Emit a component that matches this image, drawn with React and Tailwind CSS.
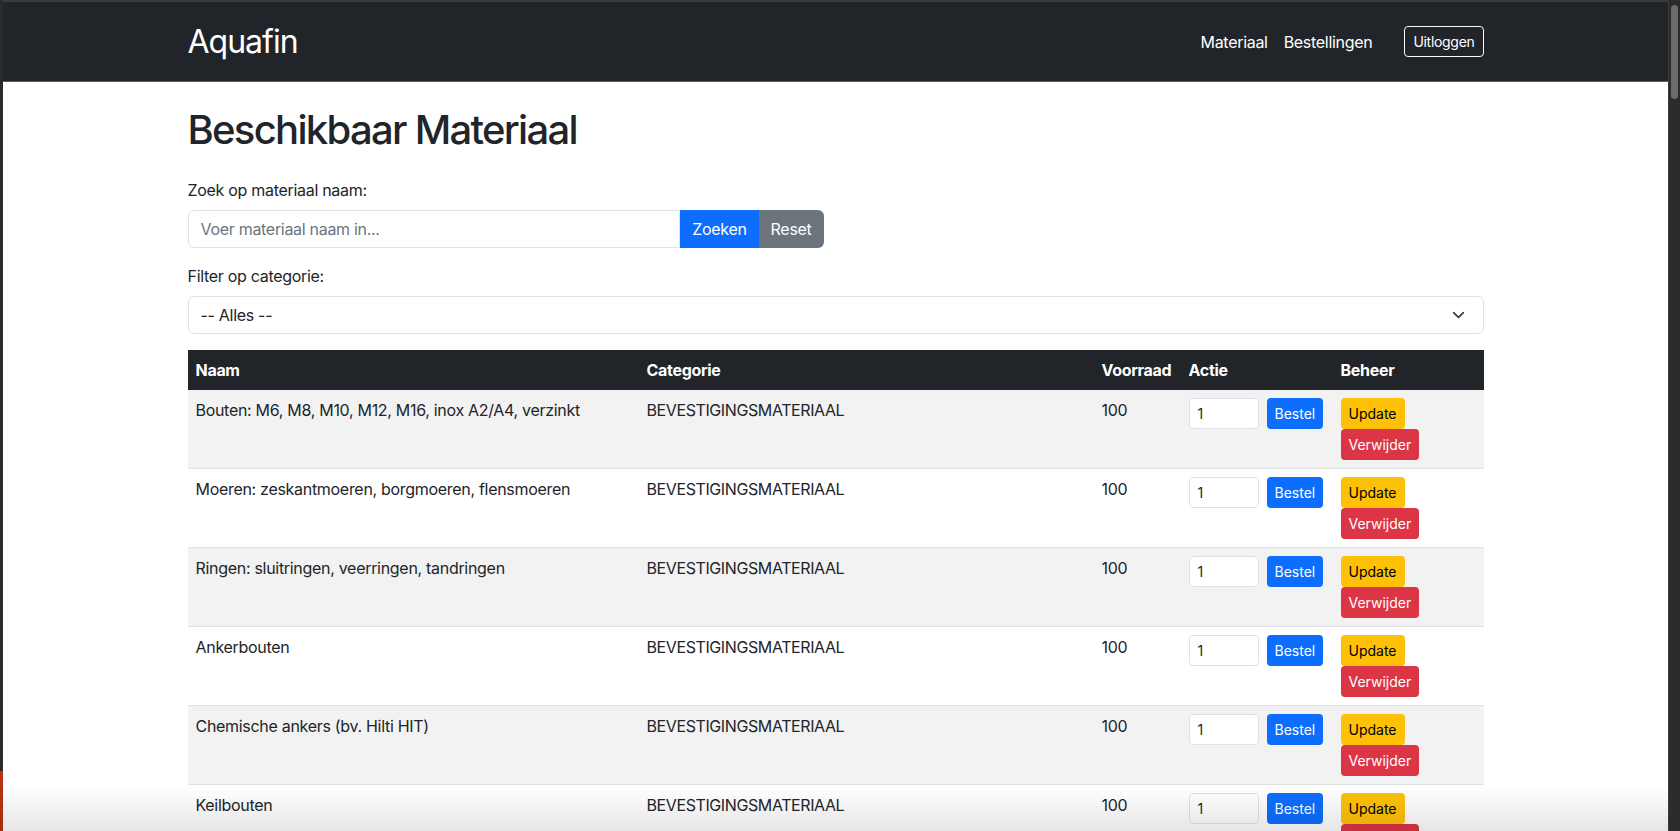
import React from 'react';

const materials = [
    'Bouten: M6, M8, M10, M12, M16, inox A2/A4, verzinkt',
    'Moeren: zeskantmoeren, borgmoeren, flensmoeren',
    'Ringen: sluitringen, veerringen, tandringen',
    'Ankerbouten',
    'Chemische ankers (bv. Hilti HIT)',
    'Keilbouten',
    'Draadstangen',
    'Schroeven',
];

const Navbar = () => (
    <nav className="bg-[#212529] border-b border-[#5c5f63] h-[80px] shrink-0">
        <div className="max-w-[1296px] mx-auto h-full flex items-center justify-between">
            <a className="text-white text-[32px] leading-none tracking-[-1px]">Aquafin</a>
            <div className="flex items-center">
                <a className="text-white text-[16px] px-2 py-2">Materiaal</a>
                <a className="text-white text-[16px] px-2 py-2">Bestellingen</a>
                <button className="ml-6 border border-[#f8f9fa] rounded text-white text-[14px] px-2 h-[31px]">
                    Uitloggen
                </button>
            </div>
        </div>
    </nav>
);

const Row = ({ name, striped }) => (
    <tr className={`${striped ? 'bg-[#f2f2f2]' : 'bg-white'} border-b border-[#dee2e6] align-top`}>
        <td className="p-2">{name}</td>
        <td className="p-2 tracking-[-0.4px]">BEVESTIGINGSMATERIAAL</td>
        <td className="p-2">100</td>
        <td className="p-2">
            <div className="flex items-start gap-2">
                <input
                    defaultValue="1"
                    className="w-[70px] h-[31px] bg-white border border-[#dee2e6] rounded px-2 text-[14px] outline-none"
                />
                <button className="h-[31px] px-2 rounded bg-[#0d6efd] text-white text-[14px] tracking-normal">Bestel</button>
            </div>
        </td>
        <td className="p-2">
            <div className="flex flex-col items-start">
                <button className="h-[31px] px-2 rounded bg-[#ffc107] text-black text-[14px] tracking-normal">Update</button>
                <button className="h-[31px] px-2 rounded bg-[#dc3545] text-white text-[14px] tracking-normal">Verwijder</button>
            </div>
        </td>
    </tr>
);

export default function App() {
    return (
        <div className="relative h-screen overflow-hidden flex bg-[#2a2a2a] font-['Inter',sans-serif] tracking-[-0.3px] text-[#212529]">
            {/* left window edge */}
            <div className="w-[3px] shrink-0 flex flex-col">
                <div className="flex-1 bg-[#2b2b2b]" />
                <div className="h-[60px] bg-[#b5330f]" />
            </div>

            {/* page */}
            <div className="flex-1 flex flex-col bg-white overflow-hidden border-t-2 border-[#3a3a3a]">
                <Navbar />

                <main className="max-w-[1296px] w-full mx-auto mt-6">
                    <h1 className="text-[40px] leading-[48px] font-medium tracking-[-1.7px] mb-6">Beschikbaar Materiaal</h1>

                    <div className="w-[636px] mb-4">
                        <label className="block text-[16px] leading-6 mb-2">Zoek op materiaal naam:</label>
                        <div className="flex h-[38px]">
                            <input
                                placeholder="Voer materiaal naam in..."
                                className="flex-1 border border-[#dee2e6] rounded-l-md px-3 text-[16px] tracking-[-0.3px] placeholder:text-[#6c757d] outline-none"
                            />
                            <button className="px-3 bg-[#0d6efd] text-white text-[16px]">Zoeken</button>
                            <button className="px-3 bg-[#6c757d] text-white text-[16px] rounded-r-md">Reset</button>
                        </div>
                    </div>

                    <div className="mb-4">
                        <label className="block text-[16px] leading-6 mb-2">Filter op categorie:</label>
                        <div className="h-[38px] border border-[#dee2e6] rounded-md flex items-center justify-between px-3">
                            <span className="text-[16px]">-- Alles --</span>
                            <svg width="13" height="10" viewBox="0 0 16 12" fill="none" stroke="#343a40" strokeWidth="2" strokeLinecap="round" strokeLinejoin="round" className="mr-[6px]">
                                <path d="M2 3l6 6 6-6" />
                            </svg>
                        </div>
                    </div>

                    <table className="w-full text-[16px] leading-6 border-collapse table-fixed">
                        <colgroup>
                            <col className="w-[451px]" />
                            <col className="w-[455px]" />
                            <col className="w-[87px]" />
                            <col className="w-[152px]" />
                            <col className="w-[151px]" />
                        </colgroup>
                        <thead>
                            <tr className="bg-[#212529] text-white text-left">
                                <th className="p-2 font-bold">Naam</th>
                                <th className="p-2 font-bold">Categorie</th>
                                <th className="p-2 font-bold">Voorraad</th>
                                <th className="p-2 font-bold">Actie</th>
                                <th className="p-2 font-bold">Beheer</th>
                            </tr>
                        </thead>
                        <tbody>
                            {materials.map((m, i) => (
                                <Row key={m} name={m} striped={i % 2 === 0} />
                            ))}
                        </tbody>
                    </table>
                </main>
            </div>

            {/* scrollbar */}
            <div className="w-[12px] shrink-0 bg-[#2c2c2c] border-l border-[#3a3a3a] pt-[5px] px-[2px]">
                <div className="h-[94px] rounded-full bg-[#6b6b6b]" />
            </div>

            {/* bottom window shadow */}
            <div className="pointer-events-none absolute left-0 right-[12px] bottom-0 h-[45px] bg-gradient-to-b from-transparent to-black/10" />
        </div>
    );
}
